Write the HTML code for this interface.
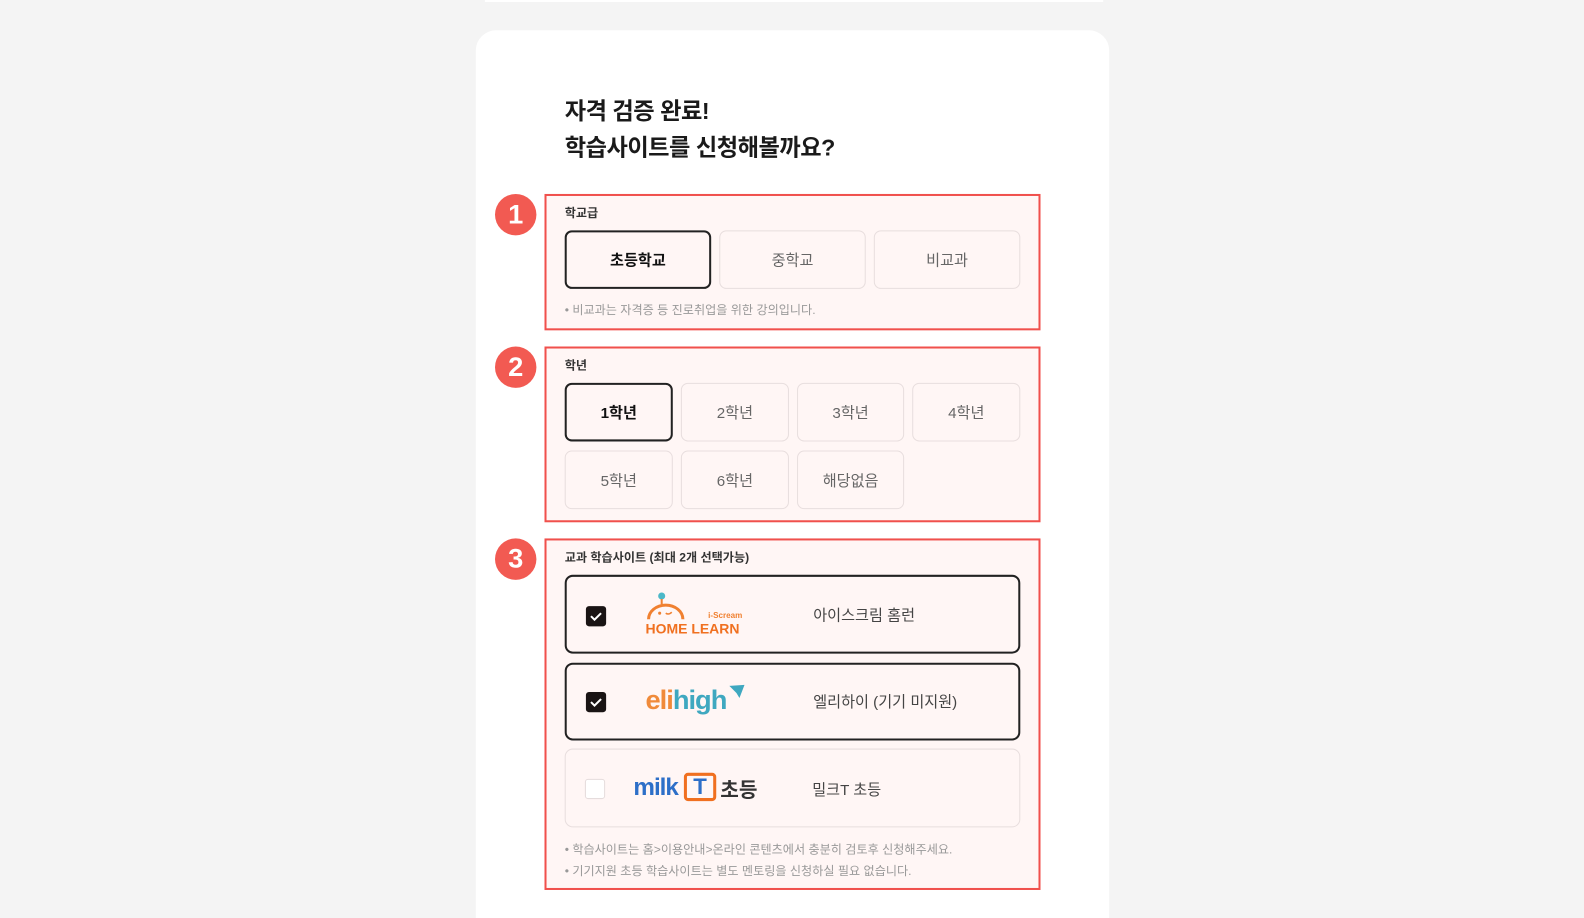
<!DOCTYPE html><html><head><meta charset="utf-8"><style>
*{box-sizing:border-box;margin:0;padding:0}
html,body{width:1584px;height:918px;overflow:hidden}
body{background:#f4f4f4;font-family:"Liberation Sans","Noto Sans CJK KR",sans-serif;position:relative;color:#222}
#clip{position:absolute;left:0;top:0;width:1584px;height:918px;overflow:hidden}
#w{position:absolute;left:0;top:0;width:1568px;height:940px;transform:scale(1.0102);transform-origin:0 0}
.card{position:absolute;left:471px;top:30px;width:627px;height:910px;background:#fff;border-radius:20px 20px 0 0}
.ab{position:absolute}
h1{position:absolute;left:559px;top:92px;font-size:23px;line-height:36px;font-weight:700;color:#1a1a1a;letter-spacing:-0.5px}
.box{position:absolute;left:539px;width:491px;border:2px solid #f0504c;background:#fff6f5}
.num{position:absolute;left:490px;width:41px;height:41px;border-radius:50%;background:#f25a52;color:#fff;font-weight:700;font-size:27px;text-align:center;line-height:41px}
.lbl{position:absolute;left:559px;font-size:12px;font-weight:700;color:#333}
.btn{position:absolute;border:1px solid #e8dede;border-radius:7px;background:#fff6f5;font-size:15px;color:#666;display:flex;align-items:center;justify-content:center}
.sel{border:2px solid #222;color:#111;font-weight:700}
.note{position:absolute;left:559px;font-size:12px;color:#999}
.site{position:absolute;left:559px;width:451px;border-radius:8px;background:#fff6f5}
.chk{position:absolute;left:19px;width:20px;height:20px;border-radius:3px;background:#1a1414}
.name{position:absolute;left:244px;font-size:15px;color:#444}
</style></head><body>
<div id="clip"><div id="w">
<div class="ab" style="left:480px;top:0;width:612px;height:2px;background:#fff"></div>
<div class="card"></div>
<h1>자격 검증 완료!<br>학습사이트를 신청해볼까요?</h1>

<div class="box" style="top:192px;height:135px"></div>
<div class="num" style="top:192px">1</div>
<div class="lbl" style="top:202px">학교급</div>
<div class="btn sel" style="left:559px;top:228px;width:145px;height:58px">초등학교</div>
<div class="btn" style="left:712px;top:228px;width:145px;height:58px">중학교</div>
<div class="btn" style="left:865px;top:228px;width:145px;height:58px">비교과</div>
<div class="note" style="top:298px">• 비교과는 자격증 등 진로취업을 위한 강의입니다.</div>

<div class="box" style="top:343px;height:174px"></div>
<div class="num" style="top:343px">2</div>
<div class="lbl" style="top:353px">학년</div>
<div class="btn sel" style="left:559px;top:379px;width:107px;height:58px">1학년</div>
<div class="btn" style="left:674px;top:379px;width:107px;height:58px">2학년</div>
<div class="btn" style="left:789px;top:379px;width:106px;height:58px">3학년</div>
<div class="btn" style="left:903px;top:379px;width:107px;height:58px">4학년</div>
<div class="btn" style="left:559px;top:446px;width:107px;height:58px">5학년</div>
<div class="btn" style="left:674px;top:446px;width:107px;height:58px">6학년</div>
<div class="btn" style="left:789px;top:446px;width:106px;height:58px">해당없음</div>

<div class="box" style="top:533px;height:348px"></div>
<div class="num" style="top:533px">3</div>
<div class="lbl" style="top:543px">교과 학습사이트 (최대 2개 선택가능)</div>

<div class="site" style="top:569px;height:78px;border:2px solid #222">
<div class="chk" style="top:29px"><svg width="20" height="20"><path d="M5 10l3.5 3.5L15 7" stroke="#fff" stroke-width="2" fill="none"/></svg></div>
<div class="ab" style="left:78px;top:14px;width:100px;height:46px">
<svg width="100" height="46"><circle cx="16" cy="5" r="3.5" fill="#4cb8c8"/><path d="M16 8v5" stroke="#f08030" stroke-width="2"/><path d="M3 28a17 14 0 0 1 34 0" stroke="#f08030" stroke-width="3" fill="none"/><circle cx="14" cy="22" r="1.5" fill="#f08030"/><path d="M20 22q3 2 6 -1" stroke="#f08030" stroke-width="1.5" fill="none"/>
<text x="62" y="27" font-size="8" font-weight="700" fill="#f08030" font-family="Liberation Sans">i-Scream</text>
<text x="0" y="42" font-size="14" font-weight="700" fill="#f07020" font-family="Liberation Sans" textLength="93" lengthAdjust="spacingAndGlyphs">HOME LEARN</text></svg></div>
<div class="name" style="top:27px">아이스크림 홈런</div></div>

<div class="site" style="top:656px;height:77px;border:2px solid #222">
<div class="chk" style="top:27px"><svg width="20" height="20"><path d="M5 10l3.5 3.5L15 7" stroke="#fff" stroke-width="2" fill="none"/></svg></div>
<div class="ab" style="left:78px;top:20px;font-size:27px;font-weight:700;letter-spacing:-1px;line-height:30px"><span style="color:#f08a3a">eli</span><span style="color:#3fa8c0">high</span></div>
<svg class="ab" style="left:158px;top:18px" width="20" height="18"><path d="M3 3L18 2L13 15L10 10Z" fill="#3fa8c0"/></svg>
<div class="name" style="top:26px">엘리하이 (기기 미지원)</div></div>

<div class="site" style="top:741px;height:78px;border:1px solid #e8dede">
<div class="chk" style="top:29px;background:#fff;border:1px solid #e5dcdc"></div>
<div class="ab" style="left:67px;top:25px;font-size:24px;font-weight:700;color:#2d6fc8;letter-spacing:-1px;line-height:26px">milk</div>
<div class="ab" style="left:117px;top:23px;width:32px;height:28px;border:3px solid #f07020;border-radius:4px;color:#2d6fc8;font-weight:700;font-size:22px;text-align:center;line-height:22px">T</div>
<div class="ab" style="left:153px;top:24px;font-size:20px;font-weight:700;color:#333">초등</div>
<div class="name" style="top:29px">밀크T 초등</div></div>

<div class="note" style="top:832px">• 학습사이트는 홈&gt;이용안내&gt;온라인 콘텐츠에서 충분히 검토후 신청해주세요.</div>
<div class="note" style="top:853px">• 기기지원 초등 학습사이트는 별도 멘토링을 신청하실 필요 없습니다.</div>
</div></div>
</body></html>
